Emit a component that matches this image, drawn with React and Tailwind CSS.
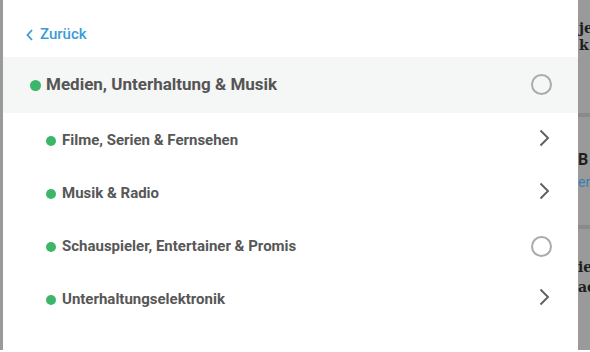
import React from 'react';

const items = [
    { label: 'Filme, Serien & Fernsehen', kind: 'chevron' },
    { label: 'Musik & Radio', kind: 'chevron' },
    { label: 'Schauspieler, Entertainer & Promis', kind: 'circle' },
    { label: 'Unterhaltungselektronik', kind: 'chevron' },
];

const Chevron = () => (
    <svg width="12" height="18" viewBox="0 0 12 18" fill="none" className="ml-[4px] -mt-[5px]">
        <path d="M2.5 1.5l7.5 7.5-7.5 7.5" stroke="#5f5f5f" strokeWidth="1.9" />
    </svg>
);

const Circle = ({ className = '' }) => (
    <span className={`block w-[21px] h-[21px] rounded-full border-2 border-[#aaaaaa] ${className}`} />
);

const App = () => {
    return (
        <div className="flex w-[590px] h-[352px] bg-white" style={{ fontFamily: 'Roboto, "Noto Sans", sans-serif' }}>
            {/* page behind, left edge */}
            <div className="w-[3px] h-[350px] bg-[#9a9a9a]" />

            {/* panel */}
            <div className="flex-1 flex flex-col bg-white">
                <div className="h-[57px] flex items-center pl-[23px] pt-[12px] text-[#3b9bd6] text-[15px] font-medium">
                    <svg width="8" height="12" viewBox="0 0 8 12" fill="none" className="mr-[6px]">
                        <path d="M6 1L1.5 6 6 11" stroke="#3b9bd6" strokeWidth="1.8" />
                    </svg>
                    Zurück
                </div>

                <div className="h-[56px] flex items-center bg-[#f5f6f6] pl-[27px] pr-[26px]">
                    <span className="w-[11px] h-[11px] rounded-full bg-[#3cb76a] mr-[5px]" />
                    <span className="text-[17px] font-bold text-[#555555] flex-1">Medien, Unterhaltung &amp; Musik</span>
                    <Circle className="-mt-[2px]" />
                </div>

                <div className="flex flex-col pt-[1px]">
                    {items.map(item => (
                        <div key={item.label} className="h-[53px] flex items-center pl-[43px] pr-[26px]">
                            <span className="w-[10px] h-[10px] rounded-full bg-[#3cb76a] mr-[6px]" />
                            <span className="text-[15px] font-bold text-[#575757] flex-1">{item.label}</span>
                            <span className="w-[21px] flex justify-center">
                                {item.kind === 'chevron' ? <Chevron /> : <Circle />}
                            </span>
                        </div>
                    ))}
                </div>
            </div>

            {/* page behind, right edge */}
            <div className="w-[12px] h-[350px] bg-[#9a9a9a] overflow-hidden flex flex-col text-[14px] font-bold leading-[17px] text-[#1f1f1f]" style={{ fontFamily: '"DejaVu Serif", serif' }}>
                <div className="h-[113px] pt-[20px] pl-[1px]">
                    <div>je</div>
                    <div>k</div>
                </div>
                <div className="h-[4px] bg-[#8a8a8a]" />
                <div className="h-[108px] pt-[34px]" style={{ fontFamily: 'Roboto, sans-serif' }}>
                    <div className="text-[16px]">B</div>
                    <div className="text-[#3a7fae] font-normal mt-[6px]">er</div>
                </div>
                <div className="h-[4px] bg-[#8a8a8a]" />
                <div className="pt-[30px]">
                    <div>ie</div>
                    <div className="mt-[3px]">ac</div>
                </div>
            </div>
        </div>
    );
};

export default App;
